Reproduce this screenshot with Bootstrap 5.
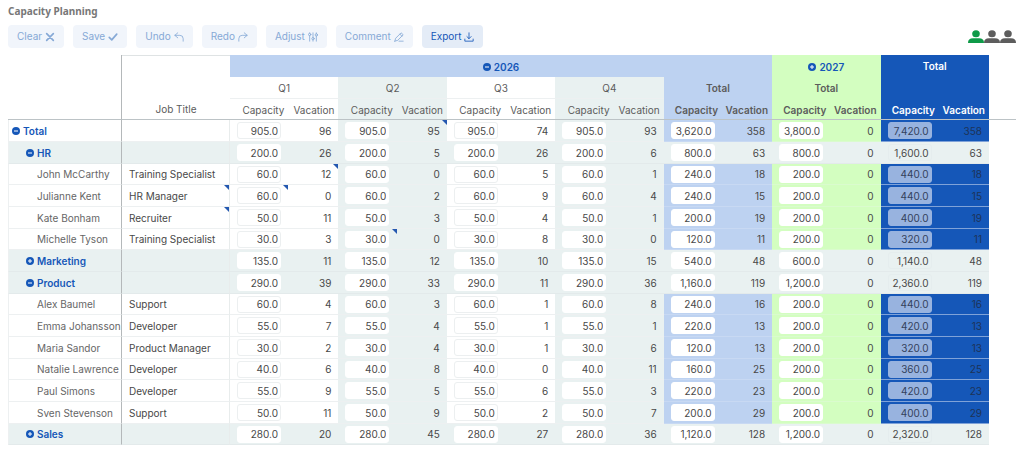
<!DOCTYPE html>
<html lang="en">
<head>
<meta charset="utf-8">
<meta name="viewport" content="width=device-width, initial-scale=1">
<title>Capacity Planning</title>
<link href="https://cdn.jsdelivr.net/npm/bootstrap@5.3.0/dist/css/bootstrap.min.css" rel="stylesheet">
<style>
  :root { --mist: #e9f1f1; --sky: #bdd2f1; --lime: #d3fec0; --royal: #1557b8; --ink: #484848; --rule: #edf0f1; }
  body { font-family: Inter, "Liberation Sans", sans-serif; font-size: 10px; line-height: 16px; color: var(--ink); background: #fff; }
  .page-title { font-family: "Noto Sans", sans-serif; font-size: 10px; line-height: 14px; font-weight: 700; color: #777; }
  .toolbar { gap: 9px; height: 23px; margin-top: 7px; margin-bottom: 7px; }
  .tool { --bs-btn-font-size: 10px; --bs-btn-line-height: 15px; --bs-btn-padding-x: 8px; --bs-btn-padding-y: 3px; --bs-btn-border-radius: 4px;
    --bs-btn-color: #1557b8; --bs-btn-bg: #e4ecf7; --bs-btn-disabled-color: #86a9d6; --bs-btn-disabled-bg: #f1f5fb; --bs-btn-disabled-opacity: 1;
    --bs-btn-border-color: transparent; --bs-btn-disabled-border-color: transparent; gap: 3px; height: 23px; }
  .tool svg { width: 10px; height: 10px; fill: none; stroke: currentColor; stroke-width: 1; stroke-linecap: round; stroke-linejoin: round; overflow: visible; }
  .tool svg.heavy { stroke-width: 2; }
  .people svg { width: 16px; height: 13px; }

  .plan { table-layout: fixed; width: 100%; border-collapse: separate; border-spacing: 0; }
  .plan th, .plan td { padding: 0; font-weight: 400; white-space: nowrap; position: relative; }
  .c-name { width: 114px; } .c-job { width: 108px; } .c-vac { width: 50px; } .c-rest { width: 27px; }
  .plan thead { color: #5c5c5c; }
  .plan thead tr { height: 22px; }
  .plan thead tr:last-child { height: 21px; }
  .plan thead tr:last-child th, .plan thead th.deep { border-bottom: 1px solid #bcc3c6; }
  .plan thead .measure { text-align: right; padding-right: 4px; padding-top: 2px; vertical-align: middle; }
  .plan thead .quarter { text-align: center; border-bottom: 1px solid var(--rule); }
  .plan thead .strong { font-weight: 600; }
  .plan thead .job { text-align: center; vertical-align: bottom; padding-bottom: 2px; border-top: 1px solid #dfe3e4; }
  .plan thead .year { text-align: center; font-weight: 700; color: var(--royal); padding-top: 2px; }
  .plan tbody tr { height: 22px; }
  .plan tbody tr:nth-child(3n) { height: 21px; }
  .plan tbody td, .plan tbody th { border-bottom: 1px solid var(--rule); vertical-align: middle; height: inherit; }
  .plan .name { border-left: 1px solid var(--rule); border-right: 1px solid #b4b8ba; color: #666; text-align: left; }
  .plan thead .name { border-left: 0; }
  .plan .jobcell { padding-left: 7px; border-right: 1px solid #e8ecec; }
  .plan .cap { padding-left: 7px; }
  .plan .vac { text-align: right; padding-right: 7px; }
  .plan .lvl0 { padding-left: 3px; } .plan .lvl1 { padding-left: 17px; } .plan .lvl2 { padding-left: 28px; }
  .plan .even { background: var(--mist); }
  .plan .sum { background: var(--sky); }
  .plan .next { background: var(--lime); }
  .plan .grand { background: var(--royal); }
  .plan thead .grand { color: #fff; }
  .plan tbody .sum { border-bottom-color: #c8d9f3; }
  .plan tbody .next { border-bottom-color: #dafbce; }
  .plan tbody .grand { border-bottom-color: #7fa2d8; color: #1d3357; }
  .plan tbody .group > * { background: var(--mist); border-bottom-color: #e3eaeb; color: var(--ink); }
  .plan tbody td.void, .plan tbody .group > td.void { border: 0; background: none; }
  .fold { border: 0; background: none; padding: 0; font-weight: 600; color: var(--royal); gap: 3px; line-height: 16px; }
  .fold svg { width: 8px; height: 8px; }
  .amount { display: block; width: 44px; height: 17px; padding: 0 2px 0 0; margin: 0; border: 1px solid #eceff0; border-radius: 3px; background: #fff; color: var(--ink); text-align: right; font-size: 10px; line-height: 15px; }
  .even .amount, .sum .amount, .next .amount, .group .amount { border-color: #fff; }
  .grand .amount { background: #98b3df; border-color: #98b3df; color: #33415c; }
  .group .grand .amount { background: transparent; border-color: #e5edee; color: var(--ink); }
  .noted::after { content: ""; position: absolute; top: 0; right: 0; border-top: 5px solid #2458b0; border-left: 5px solid transparent; }
</style>
</head>
<body>
<main class="px-2 pt-1">
  <h1 class="page-title m-0">Capacity Planning</h1>
  <div class="toolbar d-flex align-items-center">
    <button class="tool btn d-flex align-items-center" disabled>Clear <svg class="heavy" viewBox="0 0 12 12"><path d="M2 2l8 8M10 2l-8 8"/></svg></button>
    <button class="tool btn d-flex align-items-center" disabled>Save <svg class="heavy" viewBox="0 0 12 12"><path d="M1.500 6.500l3 3 6-7"/></svg></button>
    <button class="tool btn d-flex align-items-center" disabled>Undo <svg viewBox="0 0 12 12"><path d="M4.500 1L1 4l3.500 3M1 4h6q4 0 4 4v3"/></svg></button>
    <button class="tool btn d-flex align-items-center" disabled>Redo <svg viewBox="0 0 12 12"><path d="M7.500 1L11 4 7.500 7M11 4H5Q1 4 1 8v3"/></svg></button>
    <button class="tool btn d-flex align-items-center" disabled>Adjust <svg viewBox="0 0 12 12"><path d="M2 4.500V11M2 1v.5M6 1v5.500M6 9.500V11M10 1v1M10 5v6"/><circle cx="2" cy="3" r="1.400"/><circle cx="6" cy="8" r="1.400"/><circle cx="10" cy="3.500" r="1.400"/></svg></button>
    <button class="tool btn d-flex align-items-center" disabled>Comment <svg viewBox="0 0 12 12"><path d="M1 11l1-3.500L8.500 1l2.500 2.300L4.500 10 1 11zM7 2.500l2.500 2.500M6 11h5"/></svg></button>
    <button class="tool btn d-flex align-items-center">Export <svg viewBox="0 0 12 12"><path d="M6 1v7M3.500 5.500L6 8l2.500-2.500M1 8.500V11h10V8.500"/></svg></button>
    <div class="people d-flex ms-auto" role="img" aria-label="One of three users active">
      <svg viewBox="0 0 16 14" preserveAspectRatio="none" fill="#0f9a48"><circle cx="8" cy="4" r="3.800"/><path d="M0 14q0-5 5-5h6q5 0 5 5z"/></svg>
      <svg viewBox="0 0 16 14" preserveAspectRatio="none" fill="#5d5d5d"><circle cx="8" cy="4" r="3.800"/><path d="M0 14q0-5 5-5h6q5 0 5 5z"/></svg>
      <svg viewBox="0 0 16 14" preserveAspectRatio="none" fill="#5d5d5d"><circle cx="8" cy="4" r="3.800"/><path d="M0 14q0-5 5-5h6q5 0 5 5z"/></svg>
    </div>
  </div>

  <table class="plan">
    <colgroup>
      <col class="c-name"><col class="c-job">
      <col><col class="c-vac"><col><col class="c-vac"><col><col class="c-vac"><col><col class="c-vac">
      <col><col class="c-vac"><col><col class="c-vac"><col><col class="c-vac"><col class="c-rest">
    </colgroup>
    <thead>
      <tr>
        <th rowspan="3" class="name deep"></th>
        <th rowspan="3" class="job deep" scope="col">Job Title</th>
        <th colspan="10" class="year sum" scope="colgroup"><button class="fold d-inline-flex align-items-center" data-sign="minus">2026</button></th>
        <th colspan="2" class="year next" scope="colgroup"><button class="fold d-inline-flex align-items-center" data-sign="plus">2027</button></th>
        <th colspan="2" class="grand strong text-center" scope="colgroup">Total</th>
        <th rowspan="3" class="deep"></th>
      </tr>
      <tr>
        <th colspan="2" class="quarter" scope="colgroup">Q1</th>
        <th colspan="2" class="quarter even" scope="colgroup">Q2</th>
        <th colspan="2" class="quarter" scope="colgroup">Q3</th>
        <th colspan="2" class="quarter even" scope="colgroup">Q4</th>
        <th colspan="2" class="sum strong text-center" scope="colgroup">Total</th>
        <th colspan="2" class="next strong text-center" scope="colgroup">Total</th>
        <th colspan="2" class="grand"></th>
      </tr>
      <tr>
        <th class="measure" scope="col">Capacity</th><th class="measure" scope="col">Vacation</th>
        <th class="measure even" scope="col">Capacity</th><th class="measure even" scope="col">Vacation</th>
        <th class="measure" scope="col">Capacity</th><th class="measure" scope="col">Vacation</th>
        <th class="measure even" scope="col">Capacity</th><th class="measure even" scope="col">Vacation</th>
        <th class="measure sum strong" scope="col">Capacity</th><th class="measure sum strong" scope="col">Vacation</th>
        <th class="measure next strong" scope="col">Capacity</th><th class="measure next strong" scope="col">Vacation</th>
        <th class="measure grand strong" scope="col">Capacity</th><th class="measure grand strong" scope="col">Vacation</th>
      </tr>
    </thead>
    <tbody id="plan-rows"></tbody>
  </table>
</main>

<script src="https://cdn.jsdelivr.net/npm/bootstrap@5.3.0/dist/js/bootstrap.bundle.min.js"></script>
<script>
  // Each row: level, fold sign, name, job title, quarterly capacity, vacation Q1-Q4 and 2026 total, 2027 capacity
  const rows = [
    [0, 'minus', 'Total', '', 905, [96, 95, 74, 93, 358], 3800],
    [1, 'minus', 'HR', '', 200, [26, 5, 26, 6, 63], 800],
    [2, '', 'John McCarthy', 'Training Specialist', 60, [12, 0, 5, 1, 18], 200],
    [2, '', 'Julianne Kent', 'HR Manager', 60, [0, 2, 9, 4, 15], 200],
    [2, '', 'Kate Bonham', 'Recruiter', 50, [11, 3, 4, 1, 19], 200],
    [2, '', 'Michelle Tyson', 'Training Specialist', 30, [3, 0, 8, 0, 11], 200],
    [1, 'plus', 'Marketing', '', 135, [11, 12, 10, 15, 48], 600],
    [1, 'minus', 'Product', '', 290, [39, 33, 11, 36, 119], 1200],
    [2, '', 'Alex Baumel', 'Support', 60, [4, 3, 1, 8, 16], 200],
    [2, '', 'Emma Johansson', 'Developer', 55, [7, 4, 1, 1, 13], 200],
    [2, '', 'Maria Sandor', 'Product Manager', 30, [2, 4, 1, 6, 13], 200],
    [2, '', 'Natalie Lawrence', 'Developer', 40, [6, 8, 0, 11, 25], 200],
    [2, '', 'Paul Simons', 'Developer', 55, [9, 5, 6, 3, 23], 200],
    [2, '', 'Sven Stevenson', 'Support', 50, [11, 9, 2, 7, 29], 200],
    [1, 'plus', 'Sales', '', 280, [20, 45, 27, 36, 128], 1200]
  ];
  // Cells that carry a comment: row, then column (job, or c/v with the period's index)
  const notes = new Set(['0v1', '2v0', '3job', '3c0', '4job', '5c1']);
  const periods = ['Q1', 'Q2', 'Q3', 'Q4', '2026 total', '2027 total', 'Total'];
  const tones = ['', 'even', '', 'even', 'sum', 'next', 'grand'];
  const icon = sign => `<svg viewBox="0 0 16 16" aria-hidden="true"><circle cx="8" cy="8" r="8" fill="#1557b8"/><path d="M4 8h8${sign === 'plus' ? 'M8 4v8' : ''}" stroke="#fff" stroke-width="2"/></svg>`;
  const money = n => n.toLocaleString('en-US', { minimumFractionDigits: 1 });

  document.querySelectorAll('thead .fold').forEach(b => b.insertAdjacentHTML('afterbegin', icon(b.dataset.sign)));
  document.getElementById('plan-rows').innerHTML = rows.map(([level, sign, name, job, q, vac, next], r) => {
    const note = key => notes.has(r + key) ? ' noted' : '';
    const caps = [q, q, q, q, q * 4, next, q * 4 + next];
    const vacs = [...vac, 0, vac[4]];
    const label = sign ? `<button class="fold d-flex align-items-center">${icon(sign)}${name}</button>` : name;
    const cells = periods.map((p, i) =>
      `<td class="cap ${tones[i]}${note('c' + i)}"><input class="amount" type="text" value="${money(caps[i])}" aria-label="${name}, ${p} capacity"${i === 6 ? ' readonly' : ''}></td>` +
      `<td class="vac ${tones[i]}${note('v' + i)}">${vacs[i]}</td>`).join('');
    return `<tr class="${level === 1 ? 'group' : ''}"><th scope="row" class="name lvl${level}">${label}</th>` +
      `<td class="jobcell${note('job')}">${job}</td>${cells}<td class="void"></td></tr>`;
  }).join('');
</script>
</body>
</html>
